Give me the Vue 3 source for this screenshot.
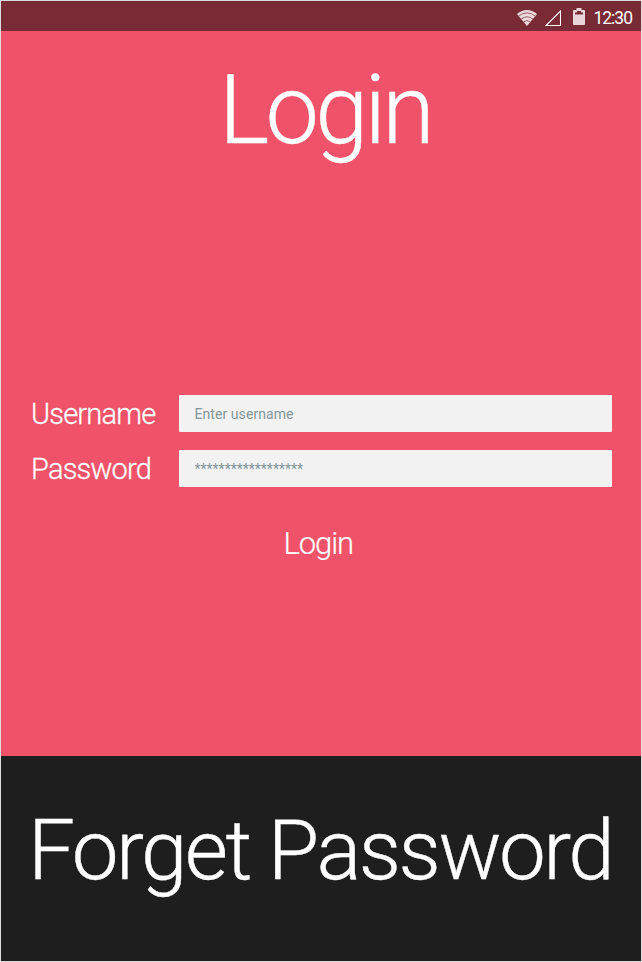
<script setup>
import { ref } from 'vue'
const username = ref('')
const password = ref('')
</script>

<template>
  <main class="screen">
    <header class="status">
      <svg class="wifi" viewBox="0 0 20 16">
        <path class="wifi-base" d="M0 4Q10-4 20 4L10 16Z" />
        <path class="wifi-gap" d="M1.5 6.2Q10-.6 18.5 6.2M4 9.2Q10 4.4 16 9.2M6.3 12Q10 9 13.7 12" />
      </svg>
      <svg class="signal" viewBox="0 0 16 16"><path d="M15.5 1V15.5H1Z" /></svg>
      <svg class="battery" viewBox="0 0 12 17">
        <path class="cell" d="M3.5 0h5v2H11q1 0 1 1v13q0 1-1 1H1q-1 0-1-1V3q0-1 1-1h2.5Z" />
        <path class="level" d="M2 4.5H4V3h4v1.5h2v2H2Z" />
      </svg>
      <span class="clock">12:30</span>
    </header>
    <section class="body">
      <h1 class="title">Login</h1>
      <form class="form" @submit.prevent>
        <label class="row"><span class="label">Username</span><input v-model="username" class="field" placeholder="Enter username" /></label>
        <label class="row"><span class="label">Password</span><input v-model="password" class="field secret" placeholder="******************" /></label>
      </form>
      <button class="login">Login</button>
    </section>
    <footer class="footer"><a class="forget">Forget Password</a></footer>
  </main>
</template>

<style>
body { margin: 0; }
</style>
<style scoped>
.screen { width: 642px; height: 962px; box-sizing: border-box; border: 1px solid #ddd; font-family: Roboto, sans-serif; font-weight: 300; color: #fff; background: #f05369; display: flex; flex-direction: column; }
.status { box-sizing: border-box; height: 30px; background: #782a35; display: flex; align-items: center; justify-content: flex-end; padding: 3px 9px 0 0; }
.wifi { width: 20px; height: 16px; margin-right: 8px; }
.wifi-base { fill: #ecd9dc; }
.wifi-gap { fill: none; stroke: #9b606a; stroke-width: 1; }
.signal { width: 16px; height: 16px; margin-right: 12.5px; fill: none; stroke: #fff; stroke-width: 1.1; }
.battery { width: 12px; height: 17px; margin: -2px 8px 0 0; }
.cell { fill: #e8d5d8; }
.level { fill: #782a35; }
.clock { font-size: 17.5px; line-height: 20px; padding-top: 1px; font-weight: 400; letter-spacing: -1px; }
.body { flex: 1; display: flex; flex-direction: column; align-items: flex-start; padding-left: 30px; }
.title { margin: 31px 0 0 188px; height: 332px; font-size: 95.5px; line-height: 96px; font-weight: 300; letter-spacing: -3.8px; -webkit-text-stroke: .4px #fff; }
.form { width: 581.4px; display: flex; flex-direction: column; gap: 18px; padding-top: 1px; }
.row { display: flex; justify-content: space-between; height: 37px; align-items: center; }
.label { font-size: 29px; letter-spacing: -.8px; -webkit-text-stroke: .3px #fff; }
.field { box-sizing: border-box; width: 433.4px; height: 37px; border: 0; border-radius: 1px; background: #f2f2f2; padding: 0 15.5px; font: 400 14px Roboto, sans-serif; outline: 0; letter-spacing: .07px; }
.field::placeholder { color: #82969a; opacity: 1; }
.secret { letter-spacing: 0; }
.login { margin: 38px 0 0 252.5px; padding: 0; background: none; border: 0; color: #fff; font: 300 31px Roboto, sans-serif; letter-spacing: -1.1px; -webkit-text-stroke: .2px #fff; }
.footer { box-sizing: border-box; height: 205px; background: #1e1e1e; padding: 46px 0 0 27px; }
.forget { font-size: 83.5px; line-height: 98px; white-space: nowrap; letter-spacing: -2.45px; -webkit-text-stroke: .4px #fff; }
</style>
